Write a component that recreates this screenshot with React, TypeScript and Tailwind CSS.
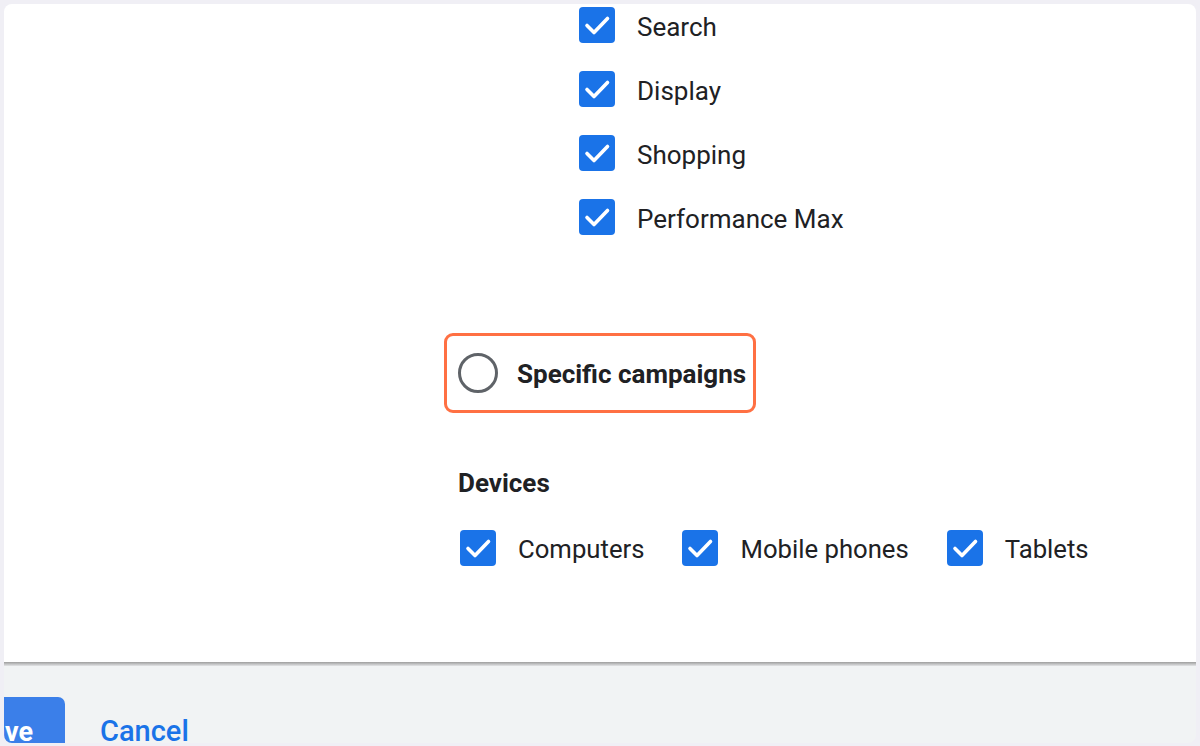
import React from "react";

function Box() {
  return (
    <span className="w-[36px] h-[36px] rounded-[4px] bg-[#1a73e8] flex items-center justify-center shrink-0">
      <svg width="36" height="36" viewBox="0 0 36 36" fill="none">
        <path d="M8 18.5 L15 25.5 L28.5 11.5" stroke="white" strokeWidth="3.6" strokeLinecap="round" strokeLinejoin="round" />
      </svg>
    </span>
  );
}

function Row({ label, small }: { label: string; small?: boolean }) {
  return (
    <div className="flex items-center h-[36px] gap-[22px]">
      <Box />
      <span className={small ? "text-[25.7px] leading-none text-[#202124] pt-[3px]" : "text-[26px] leading-none text-[#202124] pt-[3px]"}>{label}</span>
    </div>
  );
}

export default function App() {
  return (
    <div className="w-[1200px] h-[746px] bg-[#f0eff5] p-[4px] pb-[3px] overflow-hidden" style={{ fontFamily: "Roboto, 'Liberation Sans', sans-serif" }}>
      <div className="w-full h-full rounded-[8px] overflow-hidden bg-[#f1f3f4] flex flex-col">
        <div className="bg-white h-[658px] shrink-0 flex flex-col relative">
          <div className="ml-[575px] mt-[3px] flex flex-col gap-[28px]">
            <Row label="Search" />
            <Row label="Display" />
            <Row label="Shopping" />
            <Row label="Performance Max" />
          </div>
          <div className="ml-[440px] mt-[98px] w-[312px] h-[80px] border-[3px] border-[#ff7043] rounded-[9px] flex items-center pl-[11px] gap-[19px]">
            <span className="w-[40px] h-[40px] rounded-full border-[3px] border-[#5f6368] shrink-0" />
            <span className="text-[26px] font-bold text-[#202124] leading-none pt-[2px]">Specific campaigns</span>
          </div>
          <div className="ml-[454px] mt-[56px] text-[26px] font-bold text-[#202124] leading-[28px] h-[28px]">Devices</div>
          <div className="ml-[456px] mt-[33px] flex items-center gap-[38px]">
            <Row label="Computers" small />
            <Row label="Mobile phones" small />
            <Row label="Tablets" small />
          </div>
          <div className="absolute left-0 right-0 bottom-[-4px] h-[4px] bg-gradient-to-b from-[#9e9e9e] to-[#e3e4e6]" />
        </div>
        <div className="flex items-start pt-[35px]">
          <div className="ml-[-50px] w-[111px] h-[60px] bg-[#3b7fe9] rounded-tr-[7px] flex items-center justify-end pr-[32px] pt-[10px]">
            <span className="text-white font-bold text-[27px] leading-none">Save</span>
          </div>
          <span className="ml-[35px] mt-[20px] text-[#1a73e8] font-medium text-[29px] leading-[28px]">Cancel</span>
        </div>
      </div>
    </div>
  );
}
